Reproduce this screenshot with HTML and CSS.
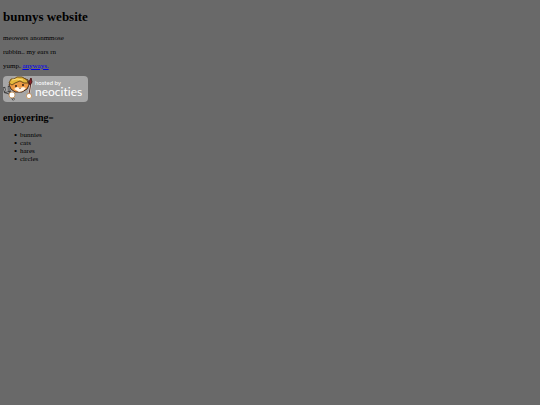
FILE: index.html
```html
<!DOCTYPE html>
<html lang="en">
<head>
    <meta charset="UTF-8">
    <meta name="viewport" content="width=device-width, initial-scale=1.0">
    <title>bunnys website</title>
    <link rel="stylesheet" href="styles.css">
</head>
<body>
    <h1>bunnys website</h1>
    <p>meowers anonmmose</p>
    <p>rubbin.. my ears rn</p>
    <p>yump. <a href="#">anyways.</a></p>

    <a class="badge" href="#">
        <svg class="cat" viewBox="0 0 30 26" aria-hidden="true">
            <!-- head -->
            <path d="M8 5L6 9l2 4 4 3h7l5-3 2-4-1-5-5-2z" fill="#ec9a45" stroke="#4a2a18" stroke-width="1"/>
            <path d="M11 13l3-2 3 1 3-1 3 1-3 3-4 1z" fill="#fff4e4"/>
            <path d="M6 7l2-4 3 0 3-2 5 0 5 3 1 3-4 0-4-2-5 2-3 2z" fill="#e5b83c" stroke="#70501c" stroke-width="1"/>
            <path d="M9 4l5-1 6 1" fill="none" stroke="#ffe07c" stroke-width="1"/>
            <path d="M13 9v2M20 8v2" stroke="#2c1c16" stroke-width="1.5"/>
            <path d="M16 12h2l-1 1z" fill="#6b2a20"/>
            <!-- wrench -->
            <path d="M1 11l1 5 4 1 5 7M6 10v4l1 3" fill="none" stroke="#444" stroke-width="2.4"/>
            <path d="M1 12l1 3 4 2 5 7M6 11v4" fill="none" stroke="#a8a8a8" stroke-width="1"/>
            <!-- brush -->
            <path d="M28 7l-2 11" stroke="#ead9c6" stroke-width="2"/>
            <path d="M28 7l-2 11" stroke="#5c3030" stroke-width="1"/>
            <path d="M28 2l1 4-2 3-1-3z" fill="#8e1f24" stroke="#4b1719" stroke-width="1"/>
            <!-- paws -->
            <circle cx="9" cy="19" r="3" fill="#fff" stroke="#c08a4c" stroke-width=".8"/>
            <circle cx="26" cy="20" r="2.6" fill="#fff" stroke="#c08a4c" stroke-width=".8"/>
        </svg>
        <span class="badge-text">
            <span class="hosted">hosted by</span>
            <span class="name">neocities</span>
        </span>
    </a>

    <h2>enjoyering<span class="mark">=</span></h2>
    <ul>
        <li>bunnies</li>
        <li>cats</li>
        <li>hares</li>
        <li>circles</li>
    </ul>
</body>
</html>
```

FILE: styles.css
```css
body { margin: 10px 3px; background-color: #696969; color: #000; font-family: "Liberation Serif", "Times New Roman", serif; font-size: 7px; line-height: 8px; }
h1 { margin: 0 0 10px; font-size: 13px; line-height: 14px; }
p { margin: 0 0 6px; }
a { color: #0000ee; }
.badge { display: flex; width: 85px; height: 26px; border-radius: 4px; background-color: #a6a6a6; color: #fff; text-decoration: none; font-family: Lato, "Open Sans", sans-serif; font-variant-ligatures: none; }
.cat { width: 30px; height: 26px; flex: none; }
.badge-text { display: flex; flex-direction: column; padding: 4px 0 0 2px; }
.hosted { font-size: 6px; line-height: 6px; }
.name { font-size: 12px; line-height: 12px; }
h2 { margin: 10px 0 7px; font-size: 10px; line-height: 12px; }
.mark { font-size: 9px; }
ul { margin: 0; padding-left: 11px; list-style: none; }
li { display: flex; }
li::before { content: "•"; width: 6px; font-size: 9px; }
```
